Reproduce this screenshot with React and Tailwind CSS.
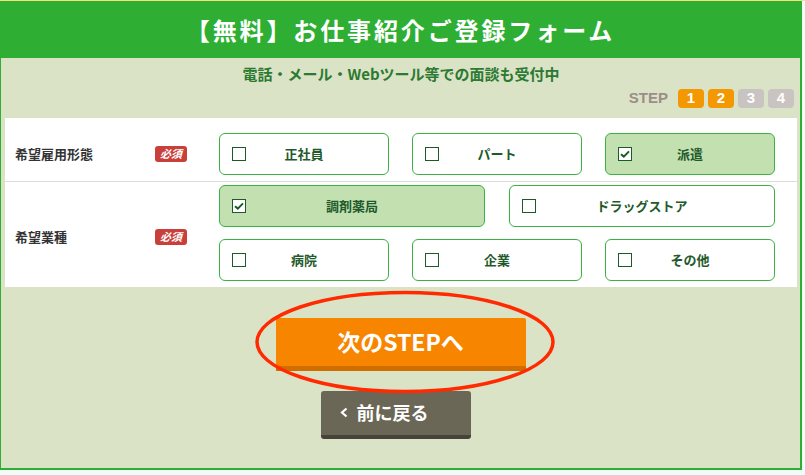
const JP = "font-['Noto_Sans_CJK_JP','Noto_Sans',sans-serif]";

const ROW1 = [
  { label: "正社員", checked: false },
  { label: "パート", checked: false },
  { label: "派遣", checked: true },
];
const ROW2A = [
  { label: "調剤薬局", checked: true },
  { label: "ドラッグストア", checked: false },
];
const ROW2B = [
  { label: "病院", checked: false },
  { label: "企業", checked: false },
  { label: "その他", checked: false },
];

function Box({ checked }) {
  return (
    <span className="absolute left-[12px] top-1/2 -translate-y-1/2 w-[14px] h-[14px] border-[1.5px] border-[#1d5a2a] bg-white flex items-center justify-center">
      {checked && (
        <svg width="10" height="8" viewBox="0 0 10 8">
          <path d="M1 4.2 L3.8 6.6 L9 1.4" stroke="#1d5a2a" strokeWidth="2" fill="none" />
        </svg>
      )}
    </span>
  );
}

function Option({ label, checked }) {
  const bg = checked ? "bg-[#c2e0b0]" : "bg-white";
  return (
    <div className={`relative h-[42px] rounded-[6px] border border-[#3bb143] ${bg} flex items-center justify-center`}>
      <Box checked={checked} />
      <span className="text-[13px] font-bold text-[#1f5a2b]">{label}</span>
    </div>
  );
}

function Badge() {
  return (
    <span className="w-[32px] h-[16px] rounded-[3px] bg-[#c9403a] text-white text-[11px] font-bold italic flex items-center justify-center leading-none">
      必須
    </span>
  );
}

function StepBox({ n, on }) {
  const bg = on ? "bg-[#f39800]" : "bg-[#c9c3c1]";
  return (
    <span className={`w-[26px] h-[19px] rounded-[4px] ${bg} text-white text-[15px] font-bold flex items-center justify-center font-['Liberation_Sans_Narrow','Liberation_Sans',sans-serif]`}>
      {n}
    </span>
  );
}

export default function App() {
  return (
    <div className={`relative w-[805px] h-[475px] overflow-hidden bg-[#f0fcf9] ${JP}`}>
      <div className="h-px bg-[#f2e37a]" />
      <div className="w-[802px] h-[469px] border-l border-r-2 border-b-2 border-[#2eaf34] bg-[#dbe3c6] flex flex-col">
        <div className="h-[57px] bg-[#2eaf34] flex items-center justify-center">
          <h1 className="text-[24px] font-bold text-white tracking-[0.12em] leading-none">【無料】お仕事紹介ご登録フォーム</h1>
        </div>

        <div className="pl-[4px] pr-[3px] flex flex-col">
          <p className="mt-[6px] h-[20px] leading-[20px] text-center text-[15px] font-bold text-[#2c7a32]">
            電話・メール・Webツール等での面談も受付中
          </p>
          <div className="mt-[3px] flex items-center justify-end gap-[4px] pr-[3px]">
            <span className="mr-[6px] text-[15px] font-bold text-[#9b8e88] font-['Liberation_Sans_Narrow','Liberation_Sans',sans-serif]">STEP</span>
            <StepBox n="1" on />
            <StepBox n="2" on />
            <StepBox n="3" />
            <StepBox n="4" />
          </div>

          <div className="mt-[8px] bg-white">
            <div className="flex items-center pl-[10px] pt-[15px] pb-[6px] border-b border-[#dddddd]">
              <span className="w-[140px] text-[13px] font-bold text-[#333]">希望雇用形態</span>
              <Badge />
              <div className="ml-[32px] w-[556px] grid grid-cols-3 gap-x-[23px]">
                {ROW1.map((o) => <Option key={o.label} {...o} />)}
              </div>
            </div>
            <div className="flex items-center pl-[10px] pt-[3px] pb-[6px]">
              <span className="w-[140px] pt-[8px] text-[13px] font-bold text-[#333]">希望業種</span>
              <span className="pt-[8px]"><Badge /></span>
              <div className="ml-[32px] w-[556px] flex flex-col gap-[12px]">
                <div className="grid grid-cols-2 gap-x-[24px]">
                  {ROW2A.map((o) => <Option key={o.label} {...o} />)}
                </div>
                <div className="grid grid-cols-3 gap-x-[23px]">
                  {ROW2B.map((o) => <Option key={o.label} {...o} />)}
                </div>
              </div>
            </div>
          </div>
        </div>

        <div className="mt-[31px] flex flex-col items-center">
          <button className="w-[250px] h-[53px] bg-[#f88500] border-b-[5px] border-[#d06e00] rounded-t-[2px] text-white text-[23px] font-bold flex items-center justify-center">
            次のSTEPへ
          </button>
          <button className="mt-[20px] mr-[10px] w-[150px] h-[48px] rounded-[3px] bg-[#6b6757] border-b-[4px] border-[#47433a] text-white text-[18px] font-bold flex items-center pl-[19px] gap-[9px]">
            <svg width="8" height="11" viewBox="0 0 8 11">
              <path d="M6.5 1.5 L2 5.5 L6.5 9.5" stroke="#fff" strokeWidth="2.2" fill="none" />
            </svg>
            前に戻る
          </button>
        </div>
      </div>

      <svg className="absolute left-[254px] top-[290px]" width="302" height="104" viewBox="0 0 302 104">
        <ellipse cx="151" cy="52" rx="148" ry="49.5" fill="none" stroke="#ff2a00" strokeWidth="3.5" />
      </svg>
    </div>
  );
}
